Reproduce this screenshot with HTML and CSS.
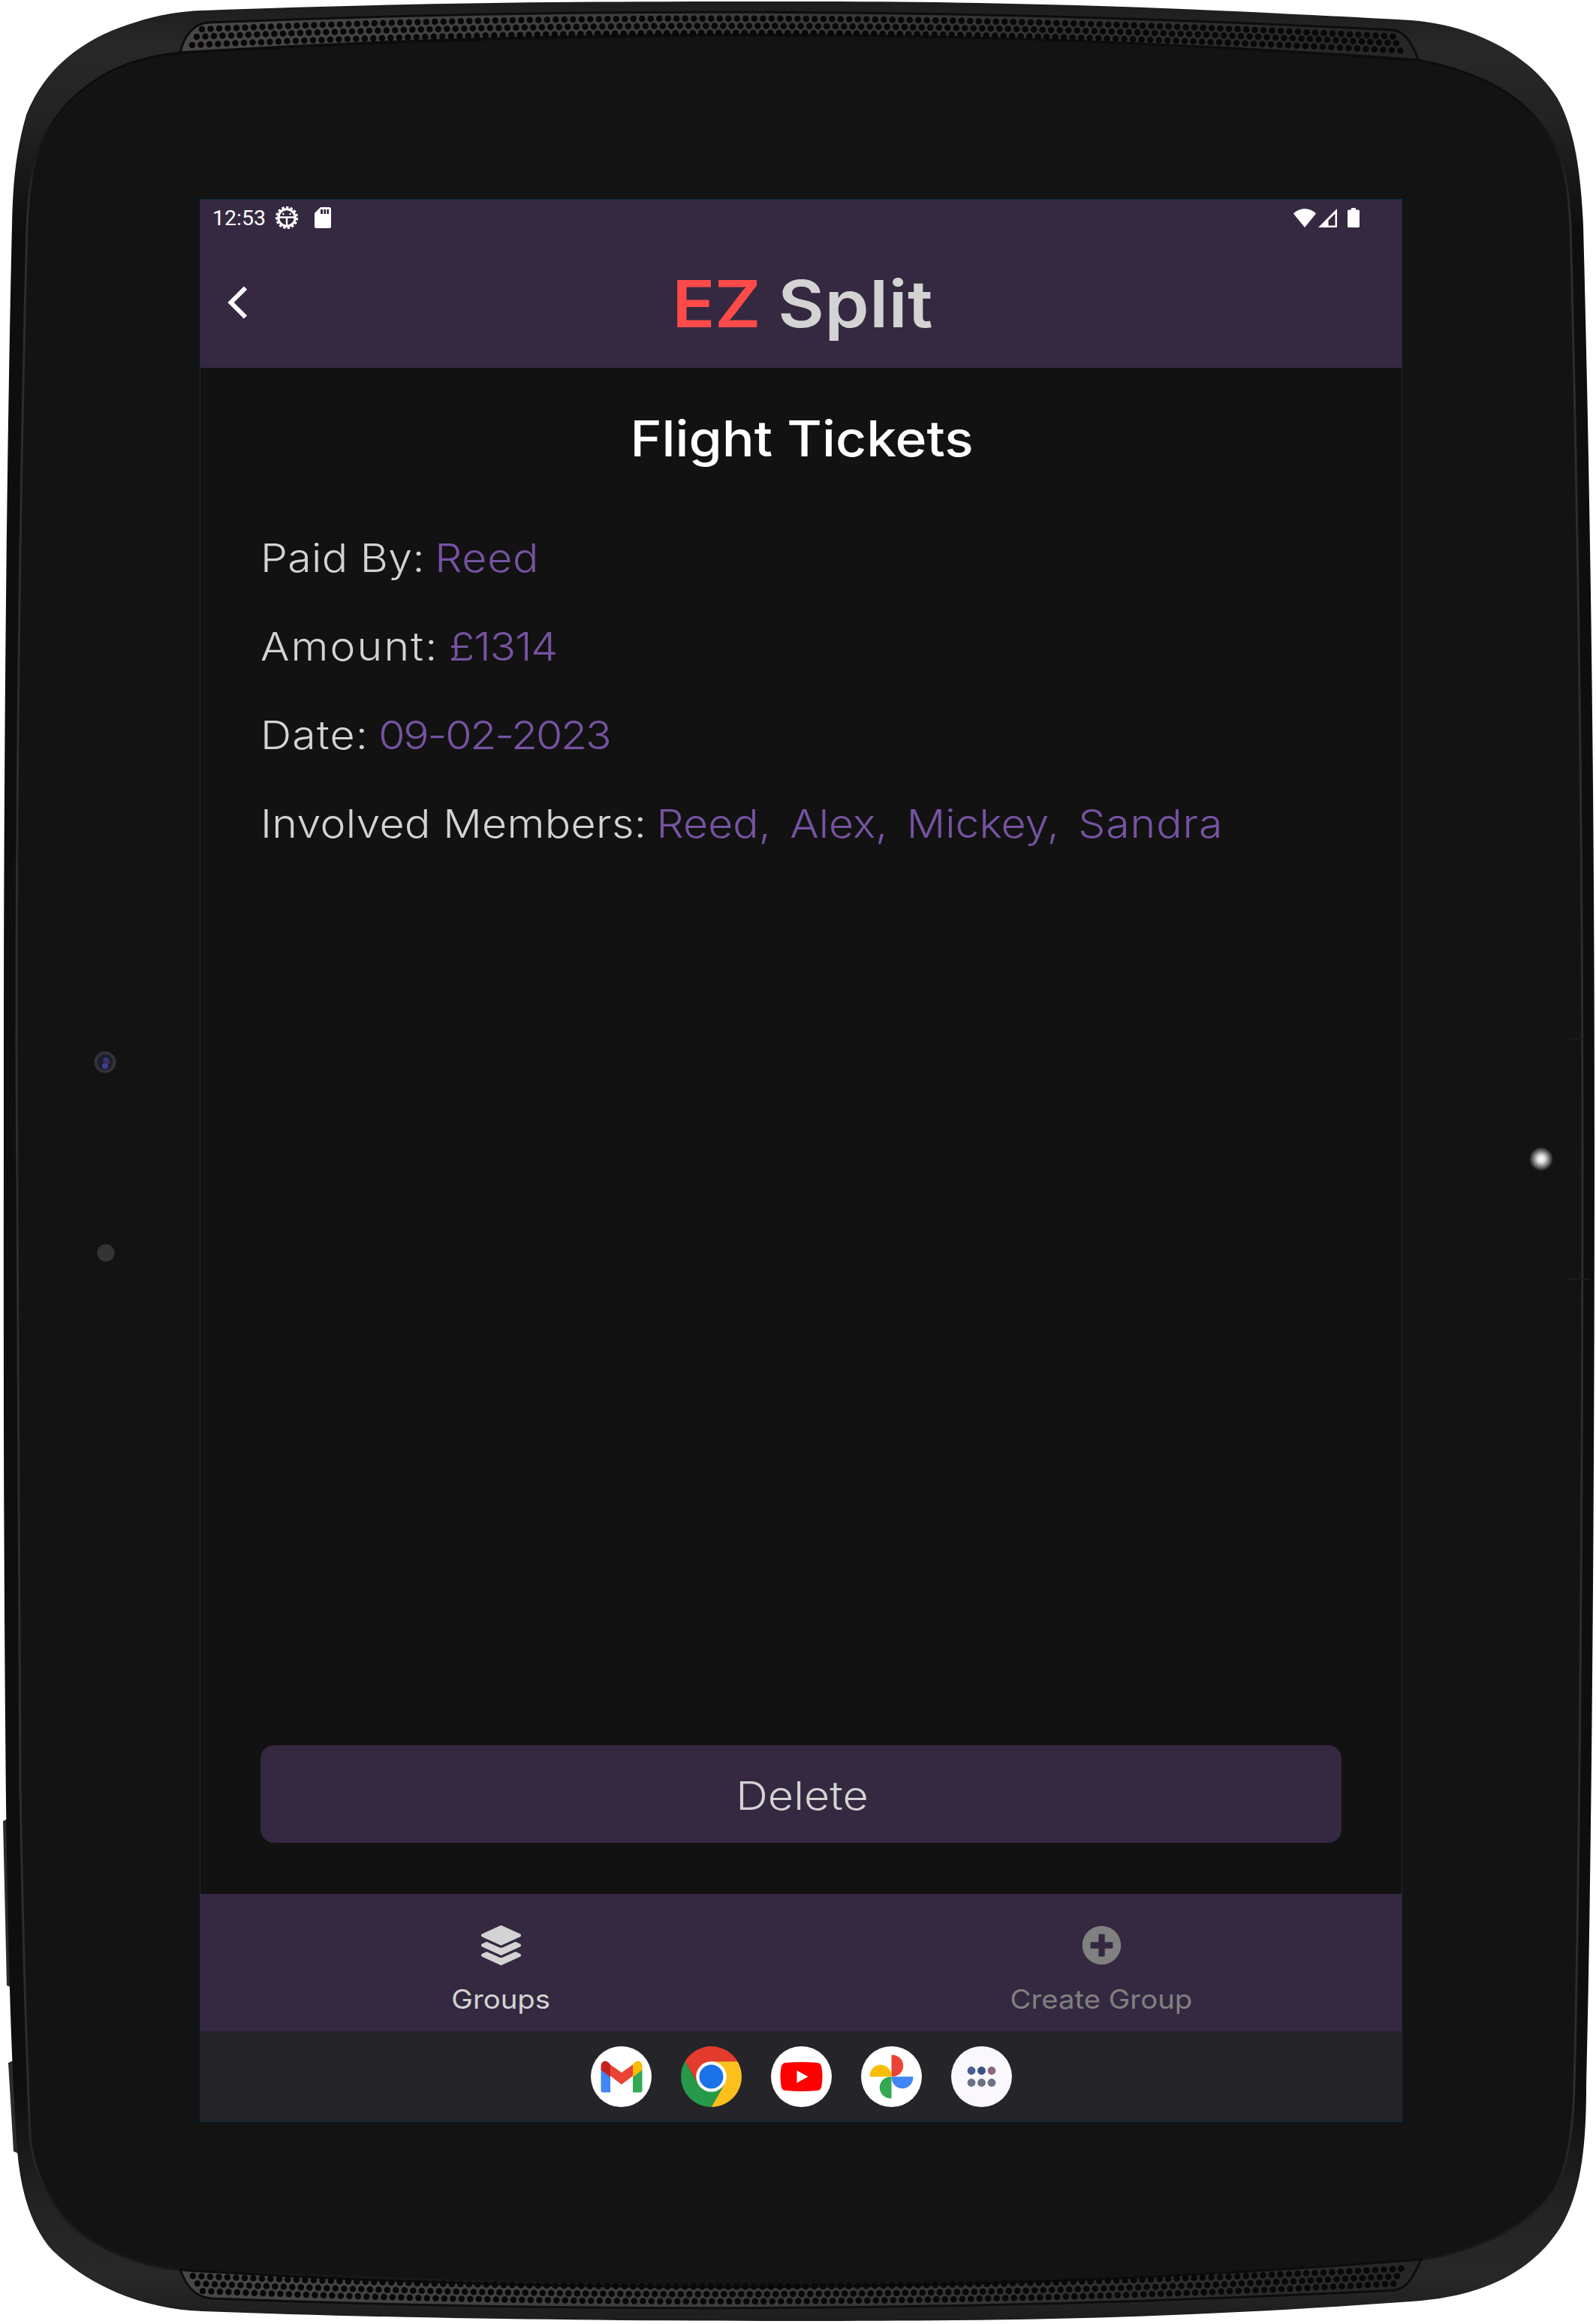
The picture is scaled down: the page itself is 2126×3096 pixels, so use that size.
FILE: index.html
```html
<!DOCTYPE html>
<html lang="en">
<head>
<meta charset="utf-8">
<title>EZ Split</title>
<link rel="stylesheet" href="styles.css">
</head>
<body>
<div class="tablet">
  <svg class="device" viewBox="0 0 2126 3096" aria-hidden="true">
    <defs>
      <linearGradient id="rim" x1="0" y1="0" x2="0" y2="1">
        <stop offset="0" stop-color="#1d1d1d"/><stop offset=".02" stop-color="#282828"/><stop offset=".05" stop-color="#232323"/><stop offset=".1" stop-color="#0e0e0e"/>
        <stop offset=".9" stop-color="#0e0e0e"/><stop offset=".95" stop-color="#232323"/><stop offset=".98" stop-color="#282828"/><stop offset="1" stop-color="#1d1d1d"/>
      </linearGradient>
      <linearGradient id="edge" x1="0" y1="0" x2="0" y2="1">
        <stop offset=".03" stop-color="#0d0d0d"/><stop offset=".08" stop-color="#2c2c2c"/>
        <stop offset=".92" stop-color="#2c2c2c"/><stop offset=".98" stop-color="#191919"/>
      </linearGradient>
      <linearGradient id="mesh" x1="0" y1="0" x2="1" y2="0">
        <stop offset="0" stop-color="#4a4646"/><stop offset=".5" stop-color="#3a3838"/><stop offset="1" stop-color="#262626"/>
      </linearGradient>
      <radialGradient id="led"><stop offset="0" stop-color="#fff"/><stop offset=".3" stop-color="#e0e0e0"/><stop offset="1" stop-color="#131313"/></radialGradient>
    </defs>
    <path d="M4 2426L10 2423L14 2647L9 2645ZM11 2748L18 2745L25 2869L18 2866Z" fill="#2b2b2b"/>
    <path fill="url(#rim)" d="M16 300C17 250 20 205 35 153C60 90 110 53 170 33C205 21 235 15 270 14C600 2 800 2 1063 2C1400 2 1600 12 1880 27C1960 33 2035 70 2074 130C2100 175 2106 240 2109 300C2122 800 2124 1200 2124 1544C2124 2000 2120 2500 2113 2780C2113 2860 2106 2920 2080 2965C2040 3030 1970 3060 1880 3066C1600 3086 1400 3092 1063 3092C800 3092 500 3088 270 3079C190 3076 120 3046 70 2998C35 2960 26 2900 23 2865C14 2740 10 2560 8 2400C4 2000 5 1700 5 1400C5 1000 9 600 16 300Z"/>
    <path fill="#131313" stroke="url(#edge)" stroke-width="3" d="M36 300C38 260 42 220 55 190C80 135 130 97 180 82C200 76 220 72 240 70C500 55 800 47 1063 47C1400 47 1650 64 1890 80C1990 100 2050 140 2078 210C2088 240 2090 270 2092 300C2105 800 2108 1200 2108 1544C2108 2000 2104 2500 2097 2780C2095 2850 2085 2900 2065 2925C2030 2970 1960 3000 1895 3010C1650 3030 1400 3046 1063 3046C800 3046 500 3036 240 3024C180 3018 130 2995 95 2965C60 2930 42 2880 40 2845C34 2700 29 2500 27 2380C22 2000 22 1700 22 1400C22 1000 28 600 36 300Z"/>
    <g stroke="#0d0d0d" stroke-width="3" fill="url(#mesh)">
      <path d="M240 70C245 48 258 31 278 30Q1063 -2 1855 40C1874 42 1882 62 1890 80Q1063 18 240 70Z"/>
      <path d="M240 3024C248 3044 258 3060 282 3062Q1063 3092 1858 3051C1876 3048 1884 3030 1893 3010Q1063 3076 240 3024Z"/>
    </g>
    <g class="holes">
      <path d="M269 39Q1063 6 1862 49"/><path d="M262 49Q1063 16 1868 58"/><path d="M256 60Q1063 24 1873 68"/>
      <path d="M257 3032Q1063 3065 1873 3022"/><path d="M263 3042Q1063 3075 1867 3032"/><path d="M270 3052Q1063 3084 1861 3042"/>
    </g>
    <circle cx="140" cy="1415" r="12.5" fill="#1b1e2c" stroke="#31323a" stroke-width="4"/>
    <circle cx="141" cy="1412" r="3.5" fill="#34366e"/><circle cx="140" cy="1420" r="4" fill="#3c3f90"/><circle cx="144.500" cy="1415" r="2" fill="#5b2b4c"/>
    <circle cx="141" cy="1669" r="11.500" fill="#353434"/>
    <circle cx="2053" cy="1544" r="16" fill="url(#led)"/>
    <path d="M2090 1384H2110M2088 1704H2118" stroke="#1c1c1c" stroke-width="2"/>
  </svg>

  <main class="screen">
    <header class="header">
      <div class="status">
        <span class="clock">12:53</span>
        <svg class="bug" viewBox="-16 -16 32 32">
          <circle r="11.200" fill="none" stroke="#fff" stroke-width="3"/>
          <circle r="13.400" fill="none" stroke="#fff" stroke-width="3.400" stroke-dasharray="3.300 2.313"/>
          <path d="M-11 -.5H11M0 0V11" stroke="#fff" stroke-width="2.400"/>
          <circle cx="-4.600" cy="-5" r="1.200" fill="#fff"/><circle cx="4.600" cy="-5" r="1.200" fill="#fff"/>
        </svg>
        <svg class="card" viewBox="0 0 22 28"><path fill="#fff" fill-rule="evenodd" d="M8 0H19.500Q22 0 22 2.500V25.500Q22 28 19.500 28H2.500Q0 28 0 25.500V8ZM8 3V9H11V3ZM12.300 3V9H15V3ZM16.300 3V9H19V3Z"/></svg>
        <span class="grow"></span>
        <svg class="wifi" viewBox="0 0 30 25"><path fill="#fff" d="M0 6.500Q6.500 0 15 0T30 6.500L15 25Z"/></svg>
        <svg class="signal" viewBox="0 0 25 25"><path fill="#fff" fill-rule="evenodd" d="M0 25L25 0V25ZM13.500 15.500V22.500H22.500V6.500Z"/></svg>
        <svg class="battery" viewBox="0 0 16 26"><path fill="#fff" d="M5 0H11V2.500H14.500Q16 2.500 16 4V24.500Q16 26 14.500 26H1.500Q0 26 0 24.500V4Q0 2.500 1.500 2.500H5Z"/></svg>
      </div>
      <div class="titlebar">
        <svg class="back" viewBox="0 0 26 44"><path d="M24 2.500L4.500 22L24 41.500" fill="none" stroke="#fff" stroke-width="6"/></svg>
        <h1 class="brand"><span class="ez">EZ</span> <span class="split">Split</span></h1>
      </div>
    </header>

    <section class="content">
      <h2 class="name">Flight Tickets</h2>
      <dl class="details">
        <div class="row"><dt>Paid By:</dt><dd class="payer">Reed</dd></div>
        <div class="row"><dt class="amount-label">Amount:</dt><dd class="amount">£1314</dd></div>
        <div class="row"><dt class="date-label">Date:</dt><dd class="date">09-02-2023</dd></div>
        <div class="row"><dt>Involved Members:</dt><dd class="members"><span>Reed,</span><span>Alex,</span><span>Mickey,</span><span class="last">Sandra</span></dd></div>
      </dl>
      <button class="delete"><span>Delete</span></button>
    </section>

    <nav class="tabs">
      <a class="tab active">
        <svg viewBox="0 0 512 512"><path fill="currentColor" d="M12.410 148.020l232.940 105.670c6.800 3.090 14.490 3.090 21.290 0l232.940-105.670c16.550-7.510 16.550-32.520 0-40.030L266.650 2.310a25.607 25.607 0 0 0-21.290 0L12.410 107.980c-16.550 7.510-16.550 32.530 0 40.040zm487.180 88.280l-58.090-26.330-161.640 73.270c-7.560 3.430-15.590 5.170-23.860 5.170s-16.290-1.740-23.860-5.170L70.510 209.970l-58.100 26.330c-16.550 7.500-16.550 32.500 0 40l232.940 105.590c6.800 3.080 14.490 3.080 21.290 0L499.590 276.300c16.550-7.500 16.550-32.500 0-40zm0 127.800l-57.870-26.230-161.860 73.370c-7.560 3.430-15.590 5.170-23.860 5.170s-16.290-1.740-23.860-5.170L70.290 337.870 12.410 364.100c-16.550 7.500-16.550 32.500 0 40l232.940 105.590c6.800 3.080 14.490 3.080 21.290 0L499.590 404.100c16.550-7.500 16.550-32.500 0-40z"/></svg>
        <span>Groups</span>
      </a>
      <a class="tab">
        <svg viewBox="0 0 512 512"><path fill="currentColor" d="M256 8C119 8 8 119 8 256s111 248 248 248 248-111 248-248S393 8 256 8zm144 276c0 6.600-5.400 12-12 12h-92v92c0 6.600-5.400 12-12 12h-56c-6.600 0-12-5.400-12-12v-92h-92c-6.600 0-12-5.400-12-12v-56c0-6.600 5.400-12 12-12h92v-92c0-6.600 5.400-12 12-12h56c6.600 0 12 5.400 12 12v92h92c6.600 0 12 5.400 12 12v56z"/></svg>
        <span>Create Group</span>
      </a>
    </nav>

    <footer class="dock">
      <svg viewBox="-40.500 -40.500 81 81">
        <circle r="40.500" fill="#fff"/>
        <path fill="#4285f4" d="M-27 -10L-14.500 0V21H-24Q-27 21 -27 18Z"/><path fill="#34a853" d="M28 -10L15.500 0V21H25Q28 21 28 18Z"/>
        <path fill="#ea4335" d="M-14.500 -16L.5 -5.500L15.500 -16V-1L.5 10.500L-14.500 -1Z"/>
        <path fill="#c5221f" d="M-27 -9V-14C-27 -20.500 -20.500 -23 -16 -18L-14.500 -16.500V.5Z"/><path fill="#fbbc04" d="M28 -9V-14C28 -20.500 21.500 -23 17 -18L15.500 -16.500V.5Z"/>
      </svg>
      <svg viewBox="-40.500 -40.500 81 81">
        <path fill="#e33b2e" d="M-35 -20.300A40.500 40.500 0 0 1 35 -20.300H0L-17.500 10Z"/>
        <path fill="#fcc01d" d="M35 -20.300A40.500 40.500 0 0 1 0 40.500L17.500 10L0 -20.300Z"/>
        <path fill="#269a48" d="M0 40.500A40.500 40.500 0 0 1 -35 -20.300L-17.500 10L0 20L17.500 10Z"/>
        <circle r="20.200" fill="#fff"/><circle r="16" fill="#1a73e8"/>
      </svg>
      <svg viewBox="-40.500 -40.500 81 81">
        <circle r="40.500" fill="#fff"/>
        <path fill="#f00" d="M-21 -18.500Q0 -20.500 21 -18.500Q26.500 -18 27 -12Q29 0 27 12Q26.500 18 21 18.500Q0 20.500 -21 18.500Q-26.500 18 -27 12Q-29 0 -27 -12Q-26.500 -18 -21 -18.500Z"/><path fill="#fff" d="M-6 -8.300L9 0L-6 8.300Z"/>
      </svg>
      <svg viewBox="-40.500 -40.500 81 81">
        <circle r="40.500" fill="#fff"/>
        <path fill="#ea4335" d="M0 0V-29C21 -29 21 0 0 0Z"/><path fill="#4285f4" d="M0 0H29C29 21 0 21 0 0Z"/>
        <path fill="#34a853" d="M0 0V29C-21 29 -21 0 0 0Z"/><path fill="#fbbc04" d="M0 0H-29C-29 -21 0 -21 0 0Z"/>
      </svg>
      <svg viewBox="-40.500 -40.500 81 81">
        <circle r="40.500" fill="#faf8fd"/>
        <circle cx="-13.500" cy="-8" r="5.400" fill="#485d92"/><circle cy="-8" r="5.400" fill="#3b4f85"/><circle cx="13.500" cy="-8" r="5.400" fill="#8c6585"/>
        <g fill="#6c7286"><circle cx="-13.500" cy="8" r="5.400"/><circle cy="8" r="5.400"/><circle cx="13.500" cy="8" r="5.400"/></g>
      </svg>
    </footer>
  </main>
</div>
</body>
</html>
```
FILE: styles.css
```css
* { box-sizing: border-box; }
body { margin: 0; background: #fff; font-family: Inter, "Open Sans", sans-serif; }
h1, h2, dl, dd { margin: 0; font-weight: inherit; }

.tablet { position: relative; width: 2126px; height: 3096px; padding: 265px 258px 269px 266px; overflow: hidden; }
.device { position: absolute; inset: 0; width: 100%; height: 100%; }
.holes { fill: none; stroke: #080808; stroke-width: 8.5; stroke-linecap: round; stroke-dasharray: 0 11.5; }

.screen { position: relative; width: 1602px; height: 2562px; border: 1px solid #0b2f42; background: #121212; display: flex; flex-direction: column; color: #d3d3d3; }

.header { height: 224px; background: #342940; color: #fff; }
.status { height: 48px; padding: 0 56px 0 16px; display: flex; align-items: center; }
.status svg { display: block; flex: none; }
.clock { font: 28.5px/48px Roboto, sans-serif; width: 83px; padding-top: 2px; }
.bug { width: 32px; height: 32px; }
.card { width: 22px; height: 28px; margin-left: 21px; }
.grow { flex: 1; }
.wifi { width: 30px; height: 25px; }
.signal { width: 25px; height: 25px; margin-left: 3px; }
.battery { width: 16px; height: 26px; margin-left: 14px; }
.titlebar { height: 176px; display: grid; grid-template-columns: 100px 1fr 100px; align-items: center; }
.back { width: 26px; height: 44px; margin: 2px 0 0 36px; }

/* Wide letterforms: headings and labels are stretched horizontally. */
.brand { font-size: 87px; line-height: 110px; font-weight: 600; text-align: center; color: #d3d3d3; padding: 5px 0 0 4px; transform: scaleX(1.09); }
.ez { color: #ff4a4a; letter-spacing: -1px; }
.split { letter-spacing: .5px; }

.content { flex: 1; display: flex; flex-direction: column; padding: 40px 80px 68px; }
.name { font-size: 66px; line-height: 108px; font-weight: 500; color: #fff; text-align: center; padding-left: 2px; transform: scaleX(1.083); }
.details { margin-top: 46px; transform: scaleX(1.1); transform-origin: left; }
.row { display: flex; height: 118px; align-items: center; font-size: 52px; font-weight: 300; white-space: nowrap; letter-spacing: .3px; }
.row dd { margin-left: 12px; color: #7653a2; display: flex; }
.payer { letter-spacing: .6px; }
.amount-label { letter-spacing: 1.9px; }
.amount { letter-spacing: -1.1px; }
.date-label { letter-spacing: 1px; }
.date { letter-spacing: -2px; }
.members { gap: 23px; letter-spacing: 0; }
.last { letter-spacing: .8px; }
.delete { margin-top: auto; height: 130px; padding: 5px 0 0 4px; border: 0; border-radius: 18px; background: #342940; color: #d3d3d3; font: 300 52px Inter, sans-serif; }
.delete span { display: inline-block; transform: scaleX(1.14); }

.tabs { height: 183px; background: #342940; display: grid; grid-template-columns: 1fr 1fr; }
.tab { display: flex; flex-direction: column; align-items: center; padding-top: 42px; font-size: 35px; line-height: 44px; color: #808080; }
.tab svg { width: 53px; height: 53px; margin-bottom: 23px; }
.tab span { transform: scaleX(1.095); }
.active { color: #d3d3d3; }

.dock { height: 120px; background: #252428; display: flex; justify-content: center; align-items: center; gap: 39px; }
.dock svg { width: 81px; height: 81px; }
```
